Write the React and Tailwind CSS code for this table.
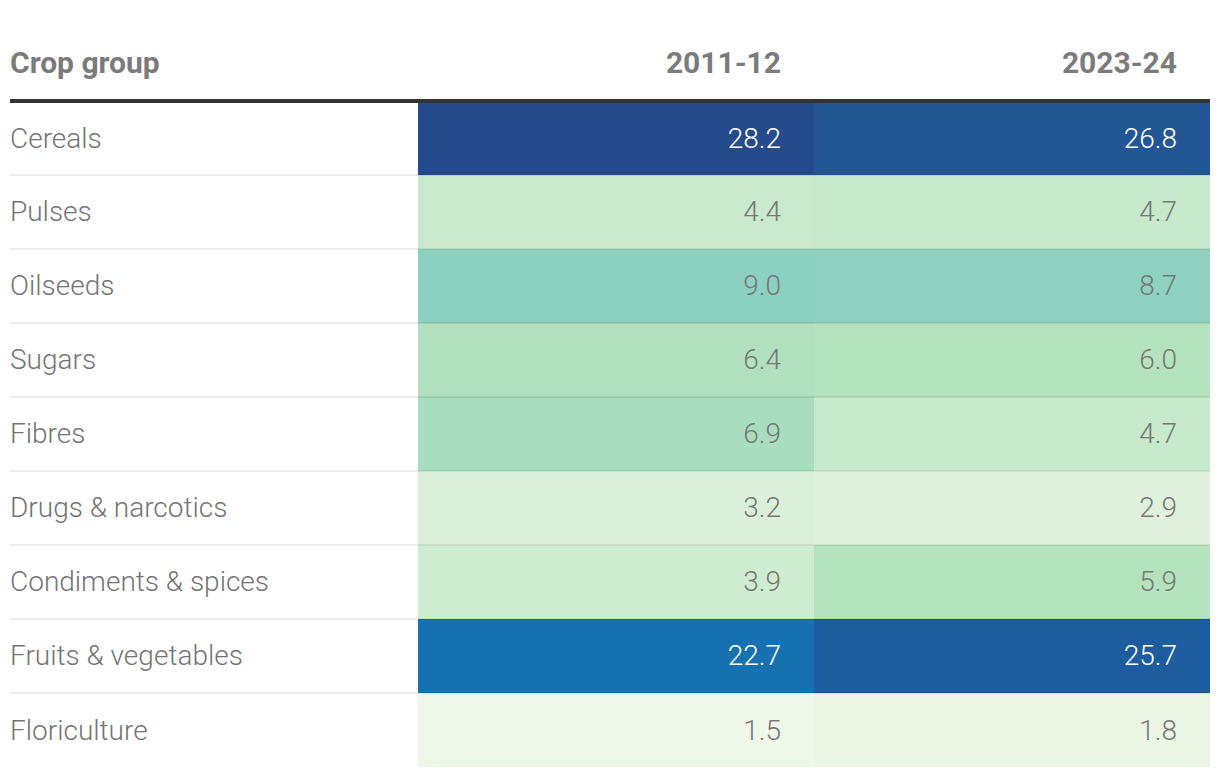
import React from 'react';

const rows = [
  { name: 'Cereals', a: '28.2', b: '26.8', ca: 'bg-[#264b8c]', cb: 'bg-[#225695]', da: true, db: true },
  { name: 'Pulses', a: '4.4', b: '4.7', ca: 'bg-[#c8e9cb]', cb: 'bg-[#c5e9c9]' },
  { name: 'Oilseeds', a: '9.0', b: '8.7', ca: 'bg-[#8bd0c1]', cb: 'bg-[#8ed1c1]' },
  { name: 'Sugars', a: '6.4', b: '6.0', ca: 'bg-[#b1e0be]', cb: 'bg-[#b4e2bc]' },
  { name: 'Fibres', a: '6.9', b: '4.7', ca: 'bg-[#a9ddbf]', cb: 'bg-[#c5e9c9]' },
  { name: 'Drugs & narcotics', a: '3.2', b: '2.9', ca: 'bg-[#dbf0d9]', cb: 'bg-[#dff1db]' },
  { name: 'Condiments & spices', a: '3.9', b: '5.9', ca: 'bg-[#ceecd0]', cb: 'bg-[#b4e2bc]' },
  { name: 'Fruits & vegetables', a: '22.7', b: '25.7', ca: 'bg-[#1771b1]', cb: 'bg-[#1d5c9e]', da: true, db: true },
  { name: 'Floriculture', a: '1.5', b: '1.8', ca: 'bg-[#eff8e8]', cb: 'bg-[#eaf6e3]' },
];

function App() {
  return (
    <div className="w-[1220px] h-[776px] bg-white px-[10px] overflow-hidden font-['Roboto',sans-serif]">
      <table className="w-[1200px] table-fixed border-collapse">
        <colgroup>
          <col className="w-[408px]" />
          <col className="w-[396px]" />
          <col className="w-[396px]" />
        </colgroup>
        <thead>
          <tr className="h-[101px] border-b-4 border-[#333333]">
            <th className="pt-[26px] text-left text-[30px] font-bold text-[#7b7b7b] align-middle">Crop group</th>
            <th className="pt-[26px] pr-[33px] text-right text-[30px] font-bold text-[#7b7b7b] align-middle">2011-12</th>
            <th className="pt-[26px] pr-[33px] text-right text-[30px] font-bold text-[#7b7b7b] align-middle">2023-24</th>
          </tr>
        </thead>
        <tbody>
          {rows.map((r, i) => (
            <tr key={r.name} className="h-[74px]">
              <td className={`text-left text-[28px] font-light text-[#747474] align-middle ${i < rows.length - 1 ? 'border-b-2 border-[#ececec]' : ''}`}>
                {r.name}
              </td>
              <td className={`${r.ca} pr-[33px] text-right text-[28px] font-light align-middle ${r.da ? 'text-white' : 'text-[#777777]'} ${i < rows.length - 1 ? 'border-b-2 border-black/[0.07]' : ''}`}>
                {r.a}
              </td>
              <td className={`${r.cb} pr-[33px] text-right text-[28px] font-light align-middle ${r.db ? 'text-white' : 'text-[#777777]'} ${i < rows.length - 1 ? 'border-b-2 border-black/[0.07]' : ''}`}>
                {r.b}
              </td>
            </tr>
          ))}
        </tbody>
      </table>
    </div>
  );
}

export default App;
